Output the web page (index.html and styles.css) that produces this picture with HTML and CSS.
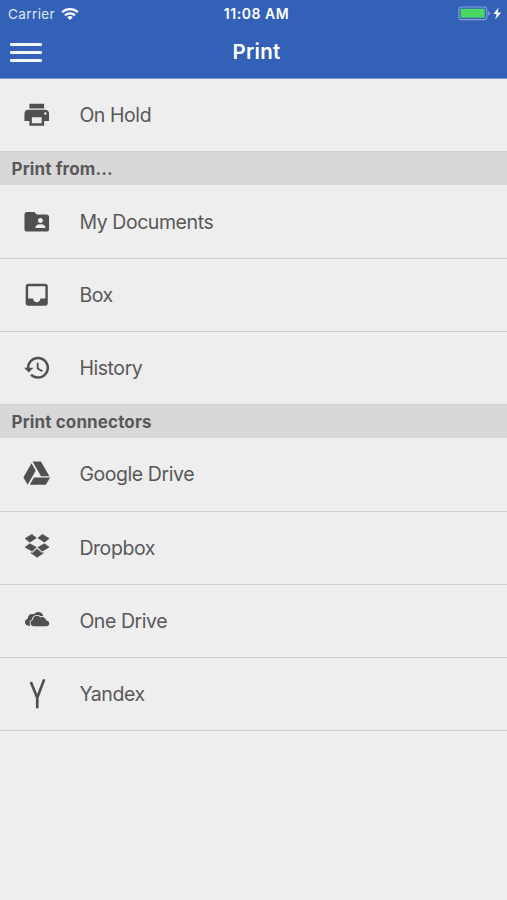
FILE: index.html
```html
<!DOCTYPE html>
<html lang="en">
<head>
<meta charset="utf-8">
<title>Print</title>
<link rel="stylesheet" href="styles.css">
</head>
<body>
<header class="header">
  <div class="status">
    <div class="status-left"><span class="carrier">Carrier</span>
      <svg class="wifi" viewBox="0 0 18 14"><g fill="none" stroke="#fff" stroke-width="2.3"><path d="M1.1 5.2a11.5 11.5 0 0 1 15.8 0"/><path d="M4 8.3a7.3 7.3 0 0 1 10 0"/></g><path fill="#fff" d="M6.2 10.2a4.2 4.2 0 0 1 5.6 0L9 13z"/></svg>
    </div>
    <span class="time">11:08 AM</span>
    <div class="status-right">
      <svg class="battery" viewBox="0 0 44 16"><rect x=".8" y="1" width="28" height="12.6" rx="2.8" fill="none" stroke="#8aa2d8" stroke-width="1.1"/><rect x="2.5" y="2.8" width="24.2" height="9" rx=".8" fill="#4bd763"/><path fill="#8aa2d8" d="M30.2 5.2q1.8.5 1.8 2.2t-1.800 2.200z"/><path fill="#fff" d="M40.5 1.5L35.5 8h3.2L37.2 13.6 43.2 6.5h-3.5z"/></svg>
    </div>
  </div>
  <div class="navbar">
    <div class="menu"><i></i><i></i><i></i></div>
    <h1 class="title">Print</h1>
  </div>
</header>
<main>
  <div class="row"><svg class="icon" viewBox="0 0 24 24"><path d="M19 8H5c-1.66 0-3 1.34-3 3v6h4v4h12v-4h4v-6c0-1.66-1.34-3-3-3zm-3 11H8v-5h8v5zm3-7c-.55 0-1-.45-1-1s.45-1 1-1 1 .45 1 1-.45 1-1 1zm-1-9H6v4h12V3z"/></svg><span class="label">On Hold</span></div>
  <h2 class="section">Print from...</h2>
  <div class="row"><svg class="icon" viewBox="0 0 24 24"><path d="M20 6h-8l-2-2H4c-1.1 0-1.99.9-1.99 2L2 18c0 1.1.9 2 2 2h16c1.1 0 2-.9 2-2V8c0-1.1-.9-2-2-2zm-5 3c1.1 0 2 .9 2 2s-.9 2-2 2-2-.9-2-2 .9-2 2-2zm4 8h-8v-1c0-1.33 2.67-2 4-2s4 .67 4 2v1z"/></svg><span class="label">My Documents</span></div>
  <div class="row"><svg class="icon" viewBox="0 0 24 24"><path d="M19 3H4.99c-1.11 0-1.98.89-1.98 2L3 19c0 1.1.88 2 1.99 2H19c1.1 0 2-.9 2-2V5c0-1.11-.9-2-2-2zm0 12h-4c0 1.66-1.35 3-3 3s-3-1.34-3-3H4.99V5H19v10z"/></svg><span class="label">Box</span></div>
  <div class="row"><svg class="icon" viewBox="0 0 24 24"><path d="M13 3a9 9 0 0 0-9 9H1.700l3.800 3.800L9.300 12H6c0-3.870 3.130-7 7-7s7 3.130 7 7-3.130 7-7 7c-1.930 0-3.680-.790-4.940-2.060l-1.420 1.420A8.950 8.950 0 0 0 13 21a9 9 0 0 0 0-18zm-1 5v5l4.280 2.540.720-1.210-3.500-2.080V8H12z"/></svg><span class="label">History</span></div>
  <h2 class="section">Print connectors</h2>
  <div class="row"><svg class="icon raised" viewBox="0 0 24 24"><path d="M7.71 3.5L1.15 15l3.43 6 6.55-11.5zM9.73 15L6.3 21h13.12l3.43-6zM22.28 14L15.42 2H8.58l6.85 12z"/></svg><span class="label">Google Drive</span></div>
  <div class="row"><svg class="icon" viewBox="0 0 30 30"><path class="bold" d="M3.200 5.600L10 1.400 14.600 5 8 9.300zM27.600 5.600L20.800 1.400 16.200 5l6.600 4.300zM3.200 14.400L8 10.900l6.600 3.700-4.300 3.900zM27.600 14.400l-4.800-3.500-6.600 3.700 4.300 3.900zM8.800 20.200l1.600.3 5-4.200 5 4.200 1.600-.3-6.600 4.500z"/></svg><span class="label">Dropbox</span></div>
  <div class="row"><svg class="icon" viewBox="0 0 30 30"><path d="M8.500 20H7.200C4.800 20 3 18.500 3 16.500c0-1.800 1.200-3.100 2.800-3.500.1-2.900 2-4.800 4.400-4.800.7 0 1.300.1 1.900.4C13 7 14.600 6 16.500 6c2.600 0 4.500 1.500 5.200 4.500-1-.3-1.700-.3-2.700 0-1.200-1.200-3-1.700-4.800-1.300-2.500.6-3.900 2.300-4 4.500-1.600.5-2.400 1.700-2.400 3.300 0 1.200.2 2.200.7 3z"/><path d="M12 20.600c-1.900 0-3.400-1.300-3.400-3.200 0-1.700 1.100-2.900 2.500-3.100 0-2.500 1.700-4.300 4.100-4.300 1.500 0 2.700.6 3.500 1.700 2.600-1.400 5.400.2 5.700 3 1.900 0 3.300 1.200 3.300 2.900 0 1.800-1.200 3-2.800 3z"/></svg><span class="label">One Drive</span></div>
  <div class="row"><svg class="icon" viewBox="0 0 30 30"><path class="stroke" d="M9 3L15.500 19V29.700M22.600.4L15.500 19"/></svg><span class="label">Yandex</span></div>
</main>
</body>
</html>
```
FILE: styles.css
```css
* { box-sizing: border-box; }
body {
  margin: 0;
  min-height: 900px;
  background: #eee;
  color: #58585a;
  font-family: Inter, "Liberation Sans", sans-serif;
}
.header {
  height: 79px;
  background: #3461b8;
  border-bottom: 1px solid #7c98cf;
  color: #fff;
}
.status {
  display: grid;
  grid-template-columns: 1fr auto 1fr;
  height: 27px;
  align-items: center;
  padding: 0 5px 0 8px;
  font-size: 13.5px;
}
.status-left { display: flex; align-items: center; gap: 6px; }
.carrier { color: #dfe7f6; letter-spacing: .4px; }
.wifi { width: 18px; height: 14px; }
.time { font-size: 14px; font-weight: 600; letter-spacing: .55px; margin-left: 3px; }
.status-right { display: flex; justify-content: flex-end; }
.battery { width: 44px; height: 16px; }
.navbar {
  display: grid;
  grid-template-columns: 1fr auto 1fr;
  height: 50px;
  align-items: center;
  padding: 0 10px;
}
.menu { display: grid; gap: 5px; width: 32px; }
.menu i { height: 3px; border-radius: 1px; background: #f4f7fd; }
.title { margin: 0 0 0 6px; font-size: 20.5px; line-height: 24px; font-weight: 600; letter-spacing: .3px; }
.row {
  display: flex;
  align-items: center;
  height: 73.2px;
  padding-left: 22.4px;
  border-bottom: 1.5px solid #d0d0d0;
}
.icon { width: 29.5px; height: 29.5px; margin-right: 27.5px; fill: #505052; flex: none; }
.raised { margin-bottom: 2px; }
.bold { stroke: #505052; stroke-width: .7; }
.stroke { fill: none; stroke: #505052; stroke-width: 2.7; }
.label { font-size: 19.5px; line-height: 26px; letter-spacing: -.43px; white-space: nowrap; }
.section {
  display: flex;
  align-items: center;
  height: 33.3px;
  margin: 0;
  padding-left: 11.5px;
  background: #d8d8d8;
  font-size: 17px;
  font-weight: 650;
  letter-spacing: .12px;
}
```
